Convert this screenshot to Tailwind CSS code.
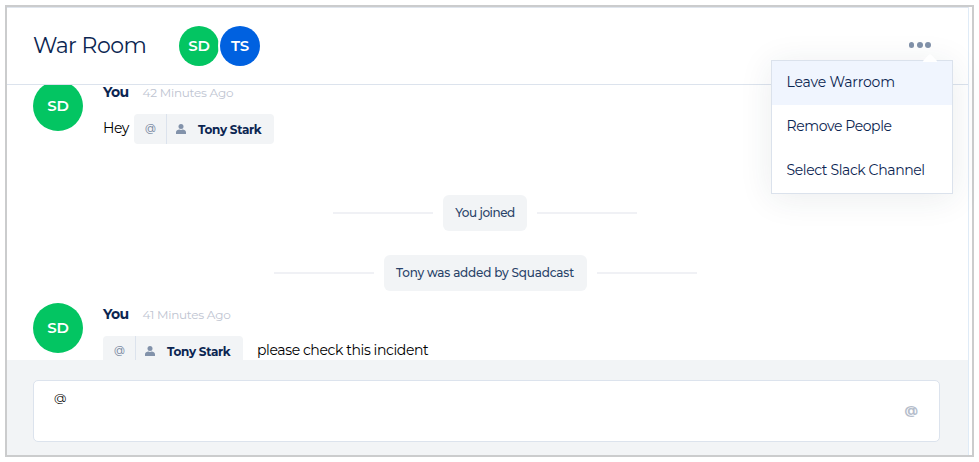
<!DOCTYPE html>
<html lang="en">
<head>
<meta charset="utf-8">
<title>War Room</title>
<script src="https://cdn.jsdelivr.net/npm/@tailwindcss/browser@4"></script>
</head>
<body class="bg-white font-['Metropolis','Montserrat','Inter',sans-serif] text-[#0b2551] whitespace-nowrap overflow-hidden">
<svg class="hidden"><symbol id="person" viewBox="0 0 10 10"><circle cx="5" cy="2.5" r="2.5"/><path d="M0 10V8.3C0 6.5 2 5.8 3.2 5.6Q5 6.5 6.8 5.6C8 5.8 10 6.5 10 8.3V10Z"/></symbol></svg>
<div class="ml-[5px] mt-[5px] h-[452px] w-[969px] border-2 border-[#cbcccd]">
  <div class="flex h-full w-[962px] flex-col border-r border-t border-r-[#dfebf7] border-t-[#dfe5ed]">
    <header class="relative z-10 flex h-[77px] shrink-0 items-center border-b border-[#dce3ed] pl-[26px] pr-[37px]">
      <h1 class="w-[146px] text-[22px] leading-[28px] tracking-[-0.55px]">War Room</h1>
      <div class="flex text-[15px] font-semibold tracking-[-0.2px] text-white">
        <div class="flex size-10 items-center justify-center rounded-full bg-[#03c562]">SD</div>
        <div class="ml-px flex size-10 items-center justify-center rounded-full bg-[#0061e0] shadow-[0_0_0_2px_#fff]">TS</div>
      </div>
      <button class="mb-[2px] ml-auto flex gap-[2.5px]" aria-label="More options">
        <span class="size-[5.8px] rounded-full bg-[#8292aa]"></span>
        <span class="size-[5.8px] rounded-full bg-[#8292aa]"></span>
        <span class="size-[5.8px] rounded-full bg-[#8292aa]"></span>
      </button>
      <div class="absolute right-[15px] top-[52px] h-[134px] w-[182px] border border-[#dbe2ec] bg-white text-[14px] shadow-[0_4px_32px_rgba(30,50,70,0.09)]">
        <svg class="absolute right-[15px] top-[-7px] h-[8px] w-[14px] fill-white" viewBox="0 0 14 8"><path d="M0 8V7L5.8 .8Q7 -.3 8.2 .8L14 7V8Z"/></svg>
        <div class="flex h-11 items-center bg-[#f0f5fe] pb-px pl-[14.5px] tracking-[-0.15px]">Leave Warroom</div>
        <div class="flex h-11 items-center pb-px pl-[14.5px] tracking-[-0.4px]">Remove People</div>
        <div class="flex h-11 items-center pb-px pl-[14.5px] tracking-[-0.38px]">Select Slack Channel</div>
      </div>
    </header>
    <main class="h-[275px] shrink-0 overflow-hidden">
      <section class="-mt-1 flex h-[114px] pl-[26px]">
        <div class="flex size-[50px] items-center justify-center rounded-full bg-[#03c562] text-[15px] font-semibold tracking-[-0.2px] text-white">SD</div>
        <div class="ml-5">
          <div class="flex h-[33px] leading-[22px]"><b class="w-[39.5px] text-[14px] tracking-[-0.6px]">You</b><span class="pt-px text-[12px] tracking-[-0.23px] text-[#bec4d1]">42 Minutes Ago</span></div>
          <div class="flex h-[30px]">
            <span class="w-[31px] text-[14px] leading-[29px] tracking-[-0.5px] text-black">Hey</span>
            <span class="flex w-[140px] items-center rounded bg-[#f2f4f6]"><span class="flex h-full w-[33px] items-center justify-center border-r border-[#dce3ed] pl-px text-[10.5px] font-medium text-[#7e8da5]">@</span><svg class="ml-[9px] size-[10px] fill-[#8292aa]"><use href="#person"/></svg><b class="ml-3 pt-[2px] text-[12px] leading-[30px] tracking-[-0.3px]">Tony Stark</b></span>
          </div>
        </div>
      </section>
      <div class="flex h-9 items-center justify-center gap-[10px] pr-[5px] text-[12px] font-medium text-[#294369]">
        <i class="h-0.5 w-[100px] bg-[#f0f1f5]"></i><span class="flex h-9 w-[84px] items-center justify-center rounded-md bg-[#f2f4f6] tracking-[-0.45px]">You joined</span><i class="h-0.5 w-[100px] bg-[#f0f1f5]"></i>
      </div>
      <div class="mt-6 flex h-9 items-center justify-center gap-[10px] pr-[5px] text-[12px] font-medium text-[#294369]">
        <i class="h-0.5 w-[100px] bg-[#f0f1f5]"></i><span class="flex h-9 w-[203px] items-center justify-center rounded-md bg-[#f2f4f6] tracking-[-0.2px]">Tony was added by Squadcast</span><i class="h-0.5 w-[100px] bg-[#f0f1f5]"></i>
      </div>
      <section class="mt-3 flex h-[70px] pl-[26px]">
        <div class="flex size-[50px] items-center justify-center rounded-full bg-[#03c562] text-[15px] font-semibold tracking-[-0.2px] text-white">SD</div>
        <div class="ml-5">
          <div class="flex h-[33px] leading-[22px]"><b class="w-[39.5px] text-[14px] tracking-[-0.6px]">You</b><span class="pt-px text-[12px] tracking-[-0.23px] text-[#bec4d1]">41 Minutes Ago</span></div>
          <div class="flex h-[30px]">
            <span class="flex w-[140px] items-center rounded bg-[#f2f4f6]"><span class="flex h-full w-[33px] items-center justify-center border-r border-[#dce3ed] pl-px text-[10.5px] font-medium text-[#7e8da5]">@</span><svg class="ml-[9px] size-[10px] fill-[#8292aa]"><use href="#person"/></svg><b class="ml-3 pt-[2px] text-[12px] leading-[30px] tracking-[-0.3px]">Tony Stark</b></span>
            <span class="ml-[14px] text-[14px] leading-[29px] tracking-[-0.39px] text-black">please check this incident</span>
          </div>
        </div>
      </section>
    </main>
    <footer class="flex-1 bg-[#f2f4f6] pl-[26px] pt-5">
      <div class="flex h-[62px] w-[907px] items-center justify-between rounded-[5px] border border-[#dce3ed] bg-white pl-5 pr-[21px]">
        <span class="self-start pt-2 text-[12px] leading-[18px] text-black">@</span>
        <span class="text-[13px] font-bold text-[#b5bdcb]">@</span>
      </div>
    </footer>
  </div>
</div>
</body>
</html>
